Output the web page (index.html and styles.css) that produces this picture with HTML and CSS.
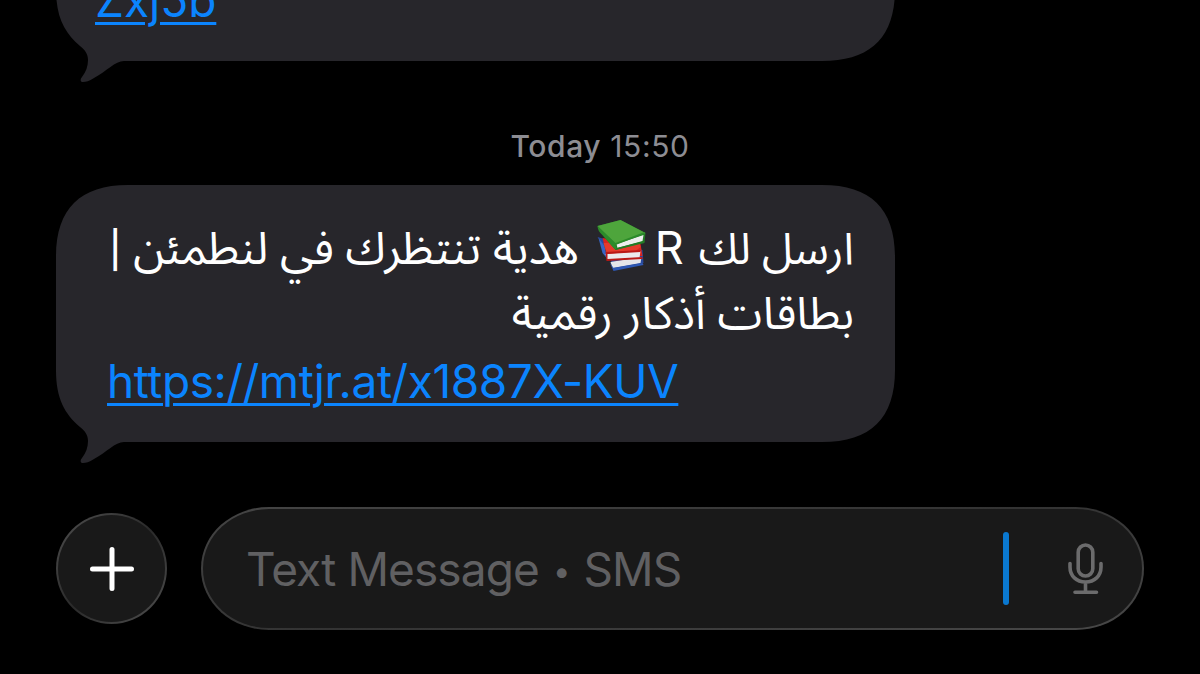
FILE: index.html
```
<!DOCTYPE html>
<html lang="ar">
<head>
  <meta charset="UTF-8" />
  <meta name="viewport" content="width=device-width, initial-scale=1.0" />
  <title>Messages</title>
  <link rel="stylesheet" href="styles.css">
</head>

<body>
  <div class="screen">
    <!-- Conversation -->
    <main class="thread">
      <div class="bubble previous">
        <svg class="bubble-shape" viewBox="0 0 839 278">
          <path id="bubblePath" d="M72 0H766C815 0 839 24 839 72V185C839 233 815 257 766 257H68C59 257 51 267 38 274C33 277 30 278 27 278C24 278 24 275 26 273C30 268 32 262 32 256C32 250 29 246 24 242C9 229 0 214 0 185V72C0 24 24 0 72 0Z"/>
        </svg>
        <a class="link" href="#">Zxj5b</a>
      </div>

      <div class="timestamp"><b>Today</b> 15:50</div>

      <div class="bubble">
        <svg class="bubble-shape" viewBox="0 0 839 278">
          <use href="#bubblePath"/>
        </svg>
        <p class="arabic" dir="rtl"><span class="sender">ارسل لك</span> <span class="latin">R</span><svg class="books" viewBox="0 0 52 54">
            <path d="M2 18L14 36L18 50L48 44L47 31Z" fill="#28499f"/>
            <path d="M3 19L9 27L12 40L7 34Z" fill="#3865c5"/>
            <path d="M15 43L46 38L45 44L17 49Z" fill="#e4e5ea"/>
            <path d="M14 43L18 49L47 44L48 46L18 52Z" fill="#2e58b5"/>
            <path d="M7 19L45 25L47 37L12 39Z" fill="#d9251f"/>
            <path d="M8 24L11 33L39 33L45 28L44 23Z" fill="#e63a2c"/>
            <path d="M10 35L45 32L44 39L12 41Z" fill="#eceaec"/>
            <path d="M10 33L45 31V33L12 35V40L47 38V40L11 42Z" fill="#ba1916"/>
            <path d="M2 7L25 1L50 14L49 23L20 31L6 15Z" fill="#237b25"/>
            <path d="M2 7L25 1L50 14L20 25Z" fill="#4ea53c"/>
            <path d="M21 25L48 16L47 22L22 29Z" fill="#edeeed"/>
            <path d="M2 7Q2 12 7 16L19 30L22 30L20 26L49 15V13L20 24Z" fill="#2c8b2a"/>
            <path d="M21 29L49 22V24L20 31Z" fill="#237b25"/>
          </svg> هدية تنتظرك في لنطمئن <span class="bar">|</span></p>
        <p class="arabic" dir="rtl">بطاقات أذكار رقمية</p>
        <a class="link url" href="#">https://mtjr.at/x1887X-KUV</a>
      </div>
    </main>

    <!-- Message composer -->
    <footer class="composer">
      <button class="add" type="button" aria-label="Add">
        <svg viewBox="0 0 44 44">
          <path d="M22 2.5V41.5M2.5 22H41.5"/>
        </svg>
      </button>
      <div class="field">
        <span class="placeholder">Text Message <span class="dot">•</span> SMS</span>
        <span class="caret"></span>
        <svg class="mic" viewBox="0 0 36 52">
          <rect x="10.2" y="2" width="14.6" height="31" rx="7.3"/>
          <path d="M2 20.5V24C2 33 8.5 39 17.5 39S33 33 33 24V20.5M17.5 39V49M7 49.3H28.5"/>
        </svg>
      </div>
    </footer>
  </div>
</body>
</html>
```
FILE: styles.css
```
* {
  box-sizing: border-box;
}

body {
  margin: 0;
  background: #000;
  color: #fff;
  font-family: Inter, "Liberation Sans", sans-serif;
}

.screen {
  display: flex;
  flex-direction: column;
  width: 1200px;
  height: 674px;
  overflow: hidden;
}

.thread {
  display: flex;
  flex-direction: column;
  justify-content: flex-end;
  height: 442px;
  padding: 0 56px;
}

.bubble {
  position: relative;
  display: flex;
  flex-direction: column;
  flex-shrink: 0;
  justify-content: flex-end;
  width: 839px;
  height: 257px;
  padding: 0 41px 27px 51px;
}

.bubble.previous {
  padding-left: 39px;
}

/* rounded body and tail, the tail hangs below the box */
.bubble-shape {
  position: absolute;
  top: 0;
  left: 0;
  width: 839px;
  height: 278px;
  fill: #27262b;
}

.bubble p,
.link {
  position: relative;
  margin: 0;
  height: 67px;
  font-size: 46px;
  line-height: 67px;
  white-space: nowrap;
}

.link {
  align-self: flex-start;
  color: #0b84fe;
  text-decoration: underline;
  text-decoration-thickness: 3px;
  text-underline-offset: 5px;
}

.link.url {
  letter-spacing: -0.4px;
}

.bubble .arabic {
  font-family: "Noto Sans Arabic", "DejaVu Sans", sans-serif;
  font-size: 45.5px;
}

.sender {
  font-size: 44px;
}

.latin,
.bar {
  font-family: Inter, sans-serif;
}

.latin {
  margin-right: 3px;
  font-size: 45px;
}

.bar {
  font-size: 36px;
  font-weight: 500;
  vertical-align: 1px;
}

.books {
  width: 53px;
  height: 54px;
  margin: 0 7px 0 4px;
  vertical-align: -9px;
}

.timestamp {
  flex-shrink: 0;
  height: 124px;
  padding-top: 66px;
  color: #8d8d93;
  font-size: 30px;
  line-height: 38px;
  letter-spacing: 0.6px;
  text-align: center;
}

.timestamp b {
  font-weight: 500;
}

.composer {
  display: flex;
  align-items: center;
  gap: 34px;
  margin-top: 65px;
  padding: 0 56px;
}

.add {
  display: flex;
  align-items: center;
  justify-content: center;
  width: 111px;
  height: 111px;
  padding: 0;
  border: 2px solid transparent;
  border-radius: 50%;
  background: linear-gradient(#191919, #191919) padding-box,
    linear-gradient(135deg, #505050, #2a2a2a 50%, #505050) border-box;
}

.add svg {
  width: 44px;
  height: 44px;
  fill: none;
  stroke: #fff;
  stroke-width: 5;
  stroke-linecap: round;
}

.field {
  display: flex;
  flex: 1;
  align-items: center;
  height: 123px;
  padding: 0 38px 0 43px;
  border: 2px solid transparent;
  border-radius: 68px / 61px;
  background: linear-gradient(#191919, #191919) padding-box,
    linear-gradient(170deg, #454545, #333 50%, #484848) border-box;
}

.placeholder {
  flex: 1;
  color: #606062;
  font-size: 46px;
  letter-spacing: -0.9px;
  white-space: nowrap;
}

.dot {
  margin: 0 2px;
  font-size: 31px;
  vertical-align: 4px;
}

.caret {
  width: 6px;
  height: 73px;
  margin-right: 59px;
  border-radius: 3px;
  background: #0a78d0;
}

.mic {
  width: 36px;
  height: 52px;
  fill: none;
  stroke: #6b6b6c;
  stroke-width: 3.6;
  stroke-linecap: round;
}
```
